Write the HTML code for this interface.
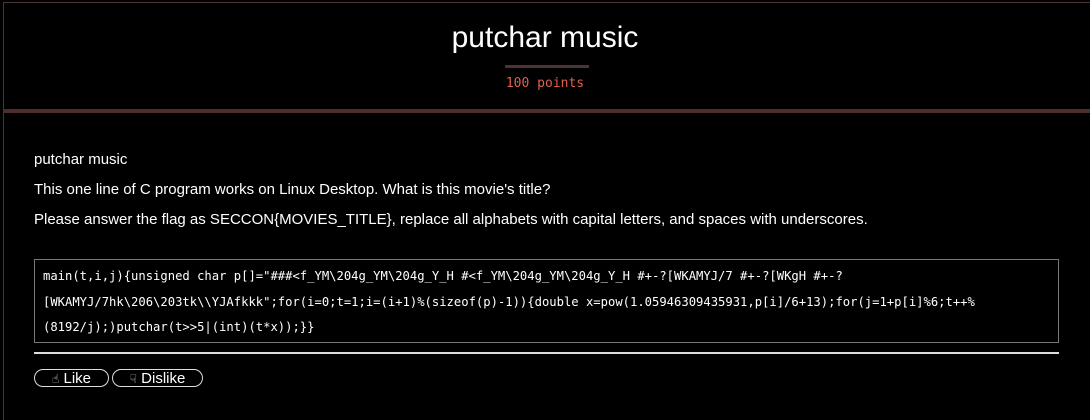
<!DOCTYPE html>
<html><head><meta charset="utf-8"><style>
html,body{margin:0;padding:0;background:#000;width:1090px;height:420px;overflow:hidden}
body{font-family:"Liberation Sans",sans-serif;color:#fff;position:relative}
.frame{position:absolute;left:3px;top:2px;right:0;bottom:0;border-left:1px solid #4d3333;border-top:1px solid #4d3333}
.bar{position:absolute;left:3px;right:0;top:109px;height:4px;background:#4d2e2e}
h1{position:absolute;top:21px;left:0;right:0;margin:0;text-align:center;font-weight:normal;font-size:30px;color:#fff}
.ul{position:absolute;left:505px;top:65px;width:84px;height:3px;background:#4d3333}
.pts{position:absolute;left:0;right:0;top:76px;text-align:center;font-family:"DejaVu Sans Mono",monospace;font-size:13px;color:#e06050}
.c{position:absolute;left:34px;width:1050px;font-size:15px;white-space:nowrap}
.code{position:absolute;left:34px;top:259px;width:1007px;height:78px;border:1px solid #777;padding:4px 8px 0 8px;font-family:"DejaVu Sans Mono",monospace;font-size:12.2px;line-height:25.5px;color:#fff;white-space:nowrap}
.hr{position:absolute;left:34px;top:352px;width:1025px;height:2px;background:#ddd}
.btn{position:absolute;top:369px;height:16px;border:1px solid #ddd;border-radius:9px;font-size:15px;line-height:17px;text-align:center;color:#fff}
.ic{font-family:"DejaVu Sans",sans-serif;font-size:12px;color:#ccc;vertical-align:0}
</style></head><body>
<div class="frame"></div>
<h1>putchar music</h1>
<div class="ul"></div>
<div class="pts">100 points</div>
<div class="bar"></div>
<div class="c" style="top:151px">putchar music</div>
<div class="c" style="top:181px">This one line of C program works on Linux Desktop. What is this movie's title?</div>
<div class="c" style="top:211px">Please answer the flag as SECCON{MOVIES_TITLE}, replace all alphabets with capital letters, and spaces with underscores.</div>
<div class="code">main(t,i,j){unsigned char p[]="###&lt;f_YM\204g_YM\204g_Y_H #&lt;f_YM\204g_YM\204g_Y_H #+-?[WKAMYJ/7 #+-?[WKgH #+-?<br>[WKAMYJ/7hk\206\203tk\\YJAfkkk";for(i=0;t=1;i=(i+1)%(sizeof(p)-1)){double x=pow(1.05946309435931,p[i]/6+13);for(j=1+p[i]%6;t++%<br>(8192/j);)putchar(t&gt;&gt;5|(int)(t*x));}}</div>
<div class="hr"></div>
<div class="btn" style="left:34px;width:73px"><span class="ic">&#9757;&#xFE0E;</span> Like</div>
<div class="btn" style="left:112px;width:89px"><span class="ic">&#9759;&#xFE0E;</span> Dislike</div>
</body></html>
